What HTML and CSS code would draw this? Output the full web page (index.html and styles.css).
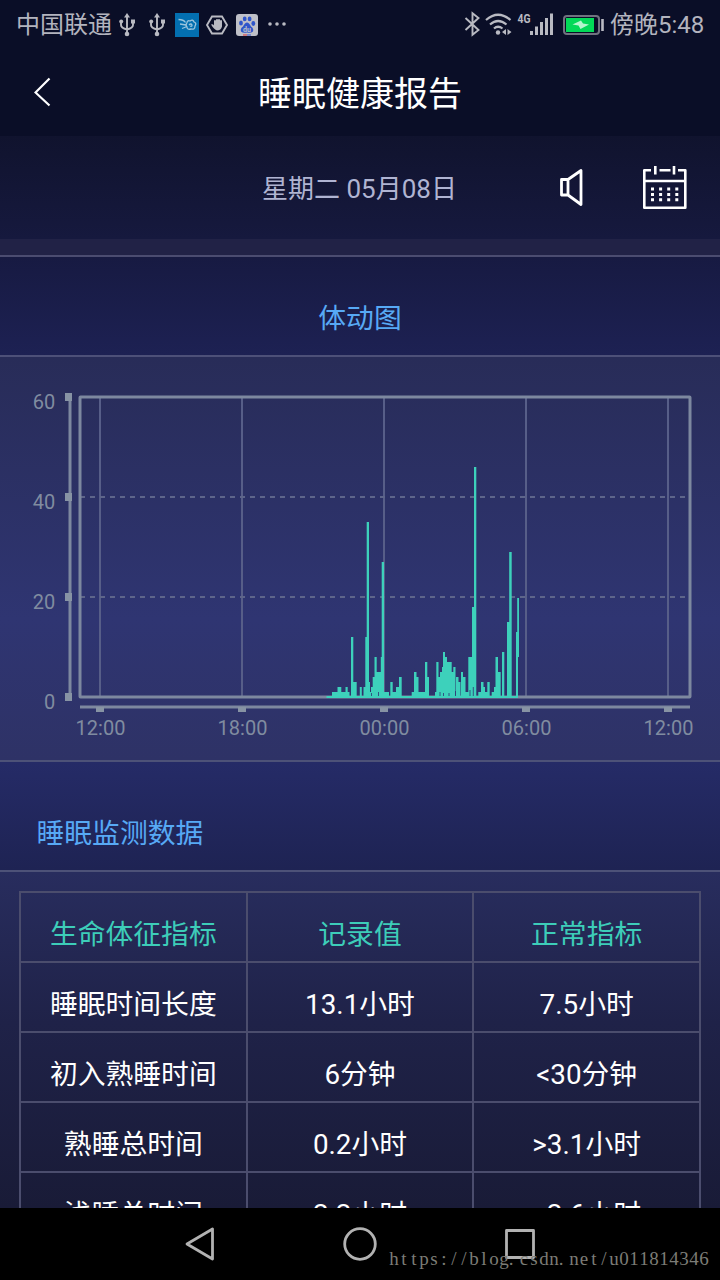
FILE: index.html
```html
<!DOCTYPE html>
<html lang="zh-CN">
<head>
<meta charset="utf-8">
<title>睡眠健康报告</title>
<link rel="stylesheet" href="styles.css">
</head>
<body>
<div class="phone">
  <div class="status">
    <span class="carrier">中国联通</span>
    <svg class="status-left" width="176" height="50" viewBox="112 0 176 50">
      <g id="usb" fill="#b9bac2" stroke="#b9bac2" stroke-width="1.900">
        <path d="M127 16V33M121 21.500V25Q121 28 127 29.500Q133 28 133 25V21.500" fill="none"/>
        <path d="M127 13l3 4.500h-6z" stroke="none"/>
        <circle cx="127" cy="34" r="2.300" stroke="none"/>
        <circle cx="121.200" cy="21.500" r="2" stroke="none"/>
        <path d="M131 19.500h4v4h-4z" stroke="none"/>
      </g>
      <use href="#usb" x="30"/>
      <rect x="175" y="13" width="24" height="24" fill="#036fb0"/>
      <path d="M178.500 19.500q5 0 7 3M180 24l6 1M182 28.500l5-2M187 23q0-3 3-2q3-2 4 1q3 1 1 4q0 4-4 3q-4 1-4-2q-2-2 0-4M189 25q2-2 3 0q0 2-2 1" fill="none" stroke="#9cc5dd" stroke-width="1.300"/>
      <path d="M212 16.500h10l5 8.500l-5 8.500h-10l-5-8.500z" fill="none" stroke="#b9bac2" stroke-width="1.900"/>
      <path d="M211 24.500q2-1 3 1v-5q1-1 2 0v-1q1-1 2 0q1-1 2 0v1q1-1 2 0v6q-1 4-5 4q-3-1-6-6z" fill="#b9bac2"/>
      <rect x="236" y="14" width="22" height="22" rx="3" fill="#bfc0c8"/>
      <g fill="#2f55cb">
        <ellipse cx="241" cy="23" rx="1.900" ry="2.500"/><ellipse cx="244.700" cy="18.900" rx="1.900" ry="2.400"/>
        <ellipse cx="249.600" cy="18.900" rx="1.900" ry="2.400"/><ellipse cx="253.300" cy="23.500" rx="1.900" ry="2.400"/>
        <path d="M247 22.500q2 0 4 4q3 2 2 5q-2 2-6 1q-4 1-6-1q-1-3 2-5q2-4 4-4z"/>
      </g>
      <text x="247" y="31.500" class="paw">du</text>
      <path d="M243 35h4" stroke="#d33"/><path d="M247 35h4" stroke="#2f55cb"/>
      <g fill="#b9bac2"><circle cx="270" cy="24" r="1.800"/><circle cx="277" cy="24" r="1.800"/><circle cx="284" cy="24" r="1.800"/></g>
    </svg>
    <svg class="status-right" width="146" height="50" viewBox="460 0 146 50">
      <path d="M465.500 18l13 12l-6 4.800V13.200l6 4.800l-13 12" fill="none" stroke="#b9bac2" stroke-width="1.900"/>
      <g fill="none" stroke="#b9bac2" stroke-width="2.200">
        <path d="M486 20Q498 9.500 510.500 20M490 24.500Q498 17.500 506.500 24.500M494 28.500Q498 25 502.500 28.500"/>
      </g>
      <circle cx="498" cy="32.500" r="2.200" fill="#b9bac2"/>
      <path d="M506 29v6l-4-3zM507.500 29v6l4-3z" fill="#b9bac2"/>
      <text x="517.500" y="23" class="net" textLength="13" lengthAdjust="spacingAndGlyphs">4G</text>
      <path d="M531.500 31v4M536.500 26.500V35M541.500 22V35M546.500 18V35M551.500 13.500V35" stroke="#b9bac2" stroke-width="3"/>
      <rect x="564" y="16" width="35" height="18" rx="3" fill="none" stroke="#70727f" stroke-width="2"/>
      <rect x="566" y="18" width="28" height="14" fill="#02d957"/>
      <path d="M572.500 24.500l8.500-4l2 3l6 1l-8.500 4.500l-2-3.500z" fill="#b5f5cd"/>
      <path d="M602.500 19v12" stroke="#b9bac2" stroke-width="2.600"/>
    </svg>
    <span class="clock">傍晚5:48</span>
  </div>
  <header class="header">
    <svg class="back" width="20" height="32" viewBox="0 0 20 32"><path d="M15.500 2.500L1.500 16.500L15.500 29.500" fill="none" stroke="#fff" stroke-width="2.200"/></svg>
    <h1>睡眠健康报告</h1>
  </header>
  <div class="datebar">
    <span>星期二 05月08日</span>
    <svg class="tools" width="140" height="50" viewBox="550 162 140 50">
      <g fill="none" stroke="#fff" stroke-width="2.800" stroke-linejoin="round">
        <path d="M561.500 179.500h6.500v15.500h-6.500zM568 179.500L581 170.500V204.500L568 195"/>
        <path d="M651 170.300H644.300V207.700H685.300V170.300H678M659.500 170.300H670.500M655.300 166v8.500M674 166v8.500M644 181h41" stroke-width="2.600"/>
      </g>
      <path d="M651 189h28M651 194.400h28M651 199.800h28" stroke="#fff" stroke-width="3" stroke-dasharray="3 5.100"/>
    </svg>
  </div>
  <div class="spacer"></div>
  <h2 class="chart-title">体动图</h2>
  <section class="chart">
    <svg width="720" height="403" viewBox="0 357 720 403">
      <path d="M100 397V697M242 397V697M384 397V697M526 397V697M668 397V697" stroke="#575e88" stroke-width="2"/>
      <path d="M80 497H690M80 597H690" stroke="#5e658a" stroke-width="2" stroke-dasharray="5"/>
      <g fill="none" stroke="#7d889f" stroke-width="3">
        <rect x="80" y="397" width="610" height="300" rx=".5"/>
        <path d="M70 393V701M80 707H690"/>
      </g>
      <path d="M65 393h7v8h-7zM65 493h7v8h-7zM65 593h7v8h-7zM65 693h7v8h-7zM96 707h8v5h-8zM238 707h8v5h-8zM380 707h8v5h-8zM522 707h8v5h-8zM664 707h8v5h-8z" fill="#8793a4"/>
      <g class="ylabels"><text x="55.300" y="409">60</text><text x="55.300" y="509">40</text><text x="55.300" y="609">20</text><text x="55.300" y="709">0</text></g>
      <g class="xlabels"><text x="100.500" y="735">12:00</text><text x="242.500" y="735">18:00</text><text x="384.500" y="735">00:00</text><text x="526.500" y="735">06:00</text><text x="668.500" y="735">12:00</text></g>
      <path class="motion" d="M326.500 696H332V692H337.500V687H341.300V692H345.500V687H347.700V692H349.500V696H351V637H353.300V682H356.700V696H359.800V687H361.800V696H363.500V687H365.300V637H366.700V522H369V682H370V692H371V687H372.700V677H374.500V657H376.700V672H380.800V657H381.700V562H384V692H389V696H390.300V682H392.700V692H396V687H399V677H401.700V696H411.700V692H414V672H416.500V677H418.500V692H425V662H427.300V677H429V696H435V692H436.300V662H438.500V677H440V672H442V667H443V652H445V657H447V662H451.700V672H453.300V667H455.500V696H456V677H458.500V682H460.500V696H461V672H463V677H465.500V692H468.300V657H472V607H474V467H476.300V696H478.300V692H481V682H483.500V687H485V692H487.300V682H489.700V696H491.700V692H494V687H495.500V657H498V672H500.700V696H502V652H504.300V696H507V622H509.200V552H511.700V696H516V632H517.200V598H519V657H518V698H326.500Z"/>
      <path d="M371.500 693v3M378.500 692v4M440 692v4M443.500 693v3M449 693v3M455.500 691v5M470 690v6M473.300 687v9" stroke="#303573" stroke-width=".8" fill="none"/>
    </svg>
  </section>
  <h2 class="data-title">睡眠监测数据</h2>
  <section class="data">
    <div class="table">
      <div class="cell th">生命体征指标</div><div class="cell th">记录值</div><div class="cell th">正常指标</div>
      <div class="cell">睡眠时间长度</div><div class="cell">13.1小时</div><div class="cell">7.5小时</div>
      <div class="cell">初入熟睡时间</div><div class="cell">6分钟</div><div class="cell">&lt;30分钟</div>
      <div class="cell">熟睡总时间</div><div class="cell">0.2小时</div><div class="cell">&gt;3.1小时</div>
      <div class="cell">浅睡总时间</div><div class="cell">2.2小时</div><div class="cell">&gt;2.6小时</div>
    </div>
  </section>
  <nav class="nav">
    <svg width="720" height="72" viewBox="0 1208 720 72" fill="none" stroke="#b2b2b2" stroke-width="2.800" stroke-linejoin="round">
      <path d="M187 1244L212.500 1229V1259Z"/><circle cx="360" cy="1244" r="15.300"/><rect x="506.500" y="1230.500" width="27" height="27"/>
    </svg>
    <svg class="watermark" width="320" height="24" viewBox="0 0 320 24">
      <text y="17" x="5 15 25 35 45 55 65 75 85 95 105 115 122 135 145 155 165 172 185 195 205 215 225 235 245 255 265 275 285 295 305 315">https://blog.csdn.net/u011814346</text>
    </svg>
  </nav>
</div>
</body>
</html>
```

FILE: styles.css
```css
* { box-sizing: border-box; }
body { margin: 0; background: #000; }
.phone {
  width: 720px; height: 1280px; overflow: hidden;
  display: flex; flex-direction: column;
  font-family: Roboto, "Noto Sans CJK SC", sans-serif;
  color: #fff;
}
.phone > * { flex: none; }
svg { display: block; flex: none; }
h1, h2 { margin: 0; font-weight: 400; }
.status {
  height: 50px; padding: 0 17px 0 16px;
  display: flex; align-items: center;
  background: #0a0e27; color: #b3b4be; font-size: 24px; line-height: 50px;
}
.carrier { width: 96px; white-space: nowrap; }
.status-right { margin-left: auto; }
.clock { width: 93px; margin-left: 4px; white-space: nowrap; }
.paw { font-size: 7px; font-weight: 700; fill: #bfc0c8; text-anchor: middle; }
.net { font-size: 13px; font-weight: 700; fill: #b9bac2; }
.header {
  height: 86px; display: grid; grid-template-columns: 1fr auto 1fr;
  align-items: center; background: #0a0e27;
}
.header h1 { padding-top: 2px; font-size: 34px; line-height: 50px; }
.back { margin-left: 34px; margin-top: -2px; }
.datebar {
  height: 103px; padding-right: 30px;
  display: grid; grid-template-columns: 1fr auto; align-items: center;
  background: linear-gradient(#10132e, #16193e);
  color: #b0b4d2; font-size: 26px; line-height: 40px;
}
.datebar span { padding: 2px 0 0 262px; }
.tools { margin-top: -1px; }
.spacer { height: 18px; background: #212246; border-bottom: 2px solid #4b4c70; }
.chart-title, .data-title { color: #57a9f5; font-size: 27.8px; line-height: 40px; }
.chart-title {
  height: 100px; padding-top: 42px; text-align: center;
  background: linear-gradient(#171a42, #1d2153); border-bottom: 2px solid #4d5078;
}
.chart { height: 403px; background: linear-gradient(#282c58, #2f3572 65%, #2e3266); }
.ylabels, .xlabels { fill: #808ca0; font-size: 20px; }
.ylabels { text-anchor: end; }
.xlabels { text-anchor: middle; }
.motion { fill: #3dd1bb; }
.data-title {
  height: 112px; padding: 52px 0 0 36.5px;
  background: linear-gradient(#252b67, #1e2353);
  border: solid #4d5278; border-width: 2px 0;
}
.data { height: 336px; overflow: hidden; padding: 19px 19px 0; background: linear-gradient(#282d5e, #1f2248 45%, #191b37); }
.table { display: grid; grid-template-columns: repeat(3, 1fr); border-right: 2px solid #4b4d6d; }
.cell {
  height: 70px; padding-top: 12px; text-align: center;
  border: solid #4b4d6d; border-width: 2px 0 0 2px;
  font-size: 27.8px; line-height: 60px; white-space: nowrap;
}
.th { color: #3dcdb9; }
.nav { height: 72px; background: #000; position: relative; }
.watermark { position: absolute; right: 11px; bottom: 8px; }
.watermark text { fill: #7c7c76; font: 19px "Liberation Serif", serif; text-anchor: middle; }
```
